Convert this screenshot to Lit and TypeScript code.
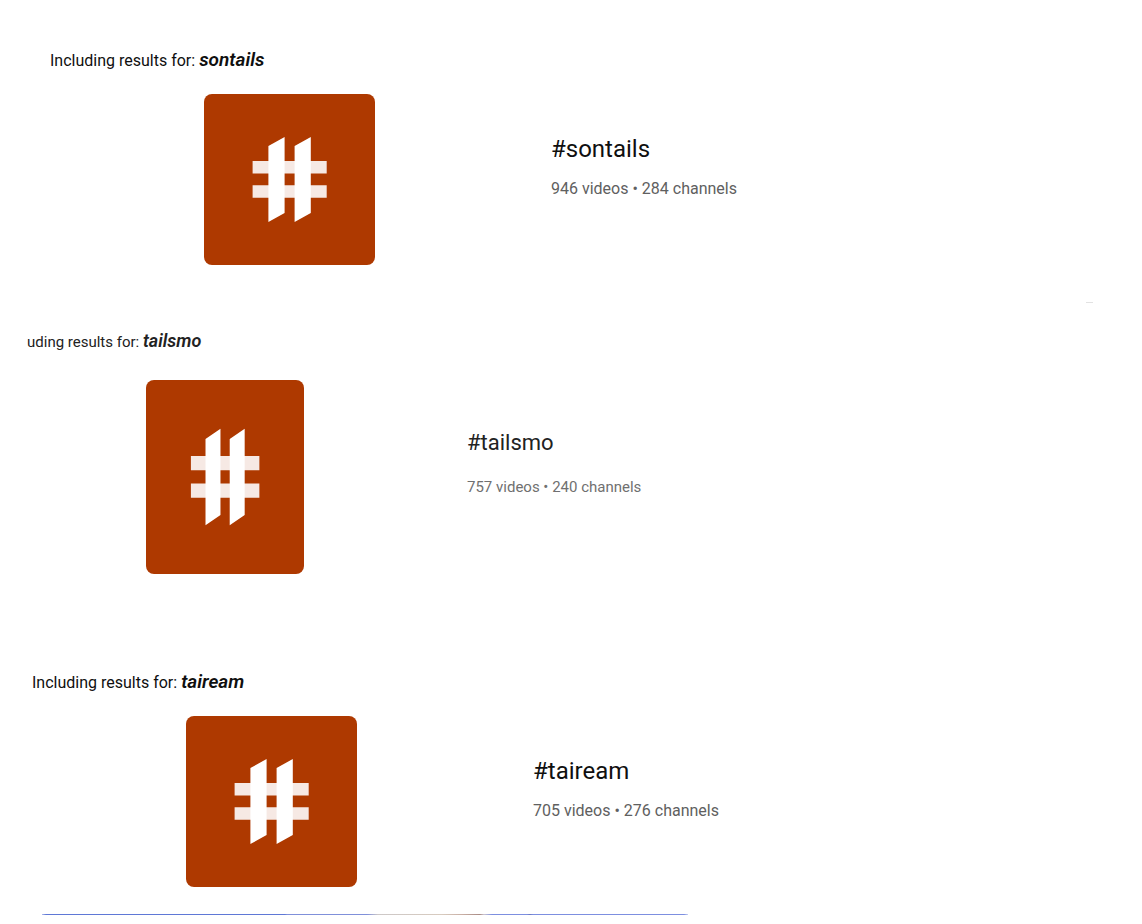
import { LitElement, html, css } from "lit";
import { customElement, property } from "lit/decorators.js";

@customElement("hash-tile")
class HashTile extends LitElement {
  static styles = css`
    :host {
      display: block;
      overflow: hidden;
      border-radius: 8px;
      background: #ae3900;
    }
    .art {
      display: block;
      width: 100%;
      height: 100%;
    }
  `;

  render() {
    return html`
      <svg class="art" viewBox="0 0 171 171" preserveAspectRatio="none" aria-hidden="true">
        <path fill="#f6e9e4" d="M48.6 67h74.1v12.6H48.6zM48.6 91.2h74.1v12.6H48.6z" />
        <path fill="#fff" d="M64.4 52 80.6 43v76l-16.2 9zM90.6 52l16.2-9v76l-16.2 9z" />
      </svg>
    `;
  }
}

@customElement("hashtag-result")
class HashtagResult extends LitElement {
  @property() lead = "Including results for:";
  @property() tag = "";
  @property() videos = "";
  @property() channels = "";

  static styles = css`
    :host {
      display: block;
      color: #0f0f0f;
      font-family: Roboto, sans-serif;
      font-size: 16px;
      line-height: 24px;
    }
    .notice {
      margin: 0;
      white-space: nowrap;
    }
    .query {
      font-size: 19px;
      font-weight: 600;
      font-style: italic;
      line-height: 16px;
    }
    .card {
      display: flex;
      align-items: flex-start;
      gap: 176px;
      margin-top: 21px;
      padding-left: 154px;
    }
    .tile {
      flex: none;
      width: 171px;
      height: 171px;
    }
    .info {
      padding-top: 39px;
    }
    .title {
      margin: 0;
      font-size: 24px;
      font-weight: 400;
      line-height: 32px;
    }
    .meta {
      margin: 12px 0 0;
      color: #606060;
    }
    :host([compact]) {
      color: #222;
      font-size: 15px;
    }
    :host([compact]) .query {
      font-size: 18px;
    }
    :host([compact]) .card {
      gap: 163px;
      margin-top: 26px;
      padding-left: 119px;
    }
    :host([compact]) .tile {
      width: 158px;
      height: 194px;
    }
    :host([compact]) .info {
      padding-top: 47px;
    }
    :host([compact]) .title {
      font-size: 22px;
    }
    :host([compact]) .meta {
      margin-top: 16px;
      color: #707070;
    }
  `;

  render() {
    return html`
      <p class="notice">${this.lead} <em class="query">${this.tag}</em></p>
      <div class="card">
        <hash-tile class="tile"></hash-tile>
        <div class="info">
          <h2 class="title">#${this.tag}</h2>
          <p class="meta">${this.videos} videos • ${this.channels} channels</p>
        </div>
      </div>
    `;
  }
}

@customElement("app-root")
class AppRoot extends LitElement {
  static styles = css`
    :host {
      display: block;
      min-height: 100vh;
      background: #fff;
    }
    .page {
      display: flex;
      flex-direction: column;
      padding-bottom: 9px;
    }
    .first {
      padding: 49px 0 0 50px;
    }
    .rule {
      align-self: flex-end;
      width: 7px;
      height: 1px;
      margin: 37px 49px 27px 0;
      background: #e2e2e2;
    }
    .second {
      padding-left: 27px;
    }
    .third {
      padding: 97px 0 0 32px;
    }
    .thumbnail {
      width: 646px;
      max-width: 100%;
      height: 1px;
      margin: 27px 0 0 42px;
      background: linear-gradient(
        90deg,
        #b0bceb 0,
        #5f78d6 4px,
        #5f78d6 243px,
        #8090da 245px,
        #8090da 325px,
        #cdc8c8 336px,
        #d8cbbf 400px,
        #c9afa5 420px,
        #a98c86 438px,
        #ccc6d0 442px,
        #7d8fe0 450px,
        #7d8fe0 485px,
        #6a78c0 488px,
        #7d8fe0 491px,
        #7d8fe0 642px,
        #c5cef2 646px
      );
    }
  `;

  render() {
    return html`
      <main class="page">
        <hashtag-result class="first" tag="sontails" videos="946" channels="284"></hashtag-result>
        <div class="rule"></div>
        <hashtag-result
          class="second"
          compact
          lead="uding results for:"
          tag="tailsmo"
          videos="757"
          channels="240"
        ></hashtag-result>
        <hashtag-result class="third" tag="taiream" videos="705" channels="276"></hashtag-result>
        <div class="thumbnail"></div>
      </main>
    `;
  }
}
